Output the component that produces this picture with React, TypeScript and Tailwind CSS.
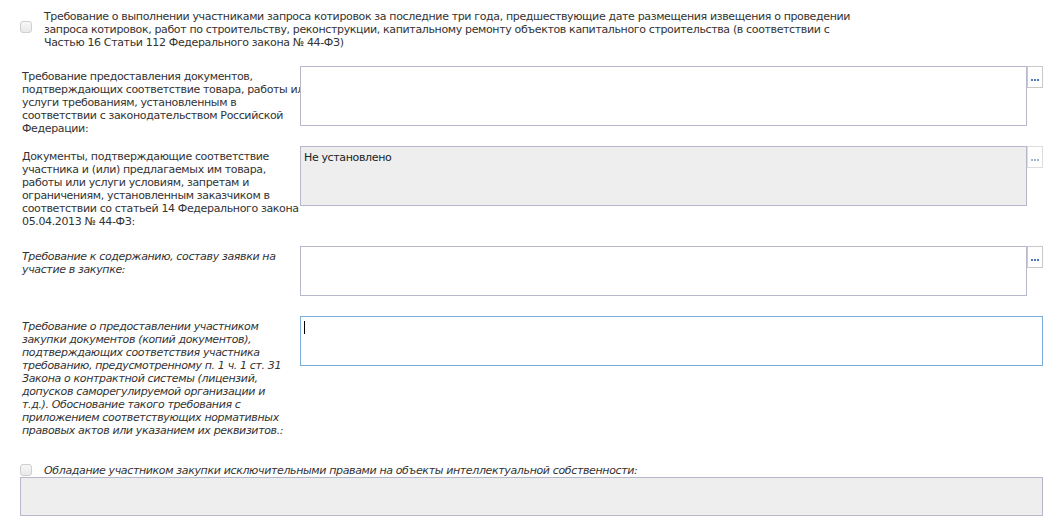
import React from "react";

const Dots: React.FC<{ disabled?: boolean }> = ({ disabled }) => (
  <div
    className={
      "w-4 h-[22px] border bg-white flex justify-center gap-px pt-[12px] shrink-0 " +
      (disabled ? "border-[#dddddd]" : "border-[#c9c9c9]")
    }
  >
    <span className={"w-[2px] h-[2px] " + (disabled ? "bg-[#a3b6d3]" : "bg-[#4e79b9]")}></span>
    <span className={"w-[2px] h-[2px] " + (disabled ? "bg-[#a3b6d3]" : "bg-[#4e79b9]")}></span>
    <span className={"w-[2px] h-[2px] " + (disabled ? "bg-[#a3b6d3]" : "bg-[#4e79b9]")}></span>
  </div>
);

const Checkbox: React.FC<{ className?: string }> = ({ className }) => (
  <span
    className={
      "w-3 h-3 rounded-[3px] border border-[#cfcfcf] bg-gradient-to-b from-[#f7f7f7] to-[#e9e9e9] shrink-0 " + (className ?? "")
    }
  ></span>
);

const Label: React.FC<{ lines: string[]; italic?: boolean }> = ({ lines, italic }) => (
  <div className={"w-[280px] shrink-0 pl-[2px] pt-[4px] overflow-hidden whitespace-nowrap " + (italic ? "italic" : "")}>
    {lines.map((l, i) => (
      <div key={i}>{l}</div>
    ))}
  </div>
);

export default function App() {
  return (
    <div className="w-[1061px] h-[523px] overflow-hidden bg-white pl-5 pr-[18px] pt-[10px] font-['DejaVu_Sans',Verdana,sans-serif] text-[11px] leading-[13px] tracking-[-0.36px] text-[#333333]">
      {/* checkbox row */}
      <div className="flex items-start gap-3 mb-[17px]">
        <Checkbox className="mt-[11px]" />
        <div className="whitespace-nowrap">
          <div>Требование о выполнении участниками запроса котировок за последние три года, предшествующие дате размещения извещения о проведении</div>
          <div>запроса котировок, работ по строительству, реконструкции, капитальному ремонту объектов капитального строительства (в соответствии с</div>
          <div>Частью 16 Статьи 112 Федерального закона № 44-ФЗ)</div>
        </div>
      </div>

      {/* documents requirement */}
      <div className="flex items-start h-[80px]">
        <Label
          lines={[
            "Требование предоставления документов,",
            "подтверждающих соответствие товара, работы или",
            "услуги требованиям, установленным в",
            "соответствии с законодательством Российской",
            "Федерации:",
          ]}
        />
        <div className="flex flex-1 items-start">
          <div className="flex-1 h-[60px] border border-[#b6b8cb] bg-white"></div>
          <Dots />
        </div>
      </div>

      <div className="flex items-start h-[100px]">
        <Label
          lines={[
            "Документы, подтверждающие соответствие",
            "участника и (или) предлагаемых им товара,",
            "работы или услуги условиям, запретам и",
            "ограничениям, установленным заказчиком в",
            "соответствии со статьей 14 Федерального закона",
            "05.04.2013 № 44-ФЗ:",
          ]}
        />
        <div className="flex flex-1 items-start">
          <div className="flex-1 h-[60px] border border-[#b6b8cb] bg-[#eeeeee] px-[3px] pt-[4px] text-[#222222]">Не установлено</div>
          <Dots disabled />
        </div>
      </div>

      <div className="flex items-start h-[70px]">
        <Label italic lines={["Требование к содержанию, составу заявки на", "участие в закупке:"]} />
        <div className="flex flex-1 items-start">
          <div className="flex-1 h-[50px] border border-[#b6b8cb] bg-white"></div>
          <Dots />
        </div>
      </div>

      <div className="flex items-start h-[145px]">
        <Label
          italic
          lines={[
            "Требование о предоставлении участником",
            "закупки документов (копий документов),",
            "подтверждающих соответствия участника",
            "требованию, предусмотренному п. 1 ч. 1 ст. 31",
            "Закона о контрактной системы (лицензий,",
            "допусков саморегулируемой организации и",
            "т.д.). Обоснование такого требования с",
            "приложением соответствующих нормативных",
            "правовых актов или указанием их реквизитов.:",
          ]}
        />
        <div className="flex-1 h-[50px] border border-[#7cacdd] bg-white pl-[3px] pt-[4px]">
          <div className="w-px h-[13px] bg-black"></div>
        </div>
      </div>

      {/* intellectual property */}
      <div className="flex items-center gap-3 h-[14px] mt-[2px]">
        <Checkbox />
        <div className="italic whitespace-nowrap">
          Обладание участником закупки исключительными правами на объекты интеллектуальной собственности:
        </div>
      </div>
      <div className="h-[39px] border border-[#b6b8cb] bg-[#eeeeee]"></div>
    </div>
  );
}
